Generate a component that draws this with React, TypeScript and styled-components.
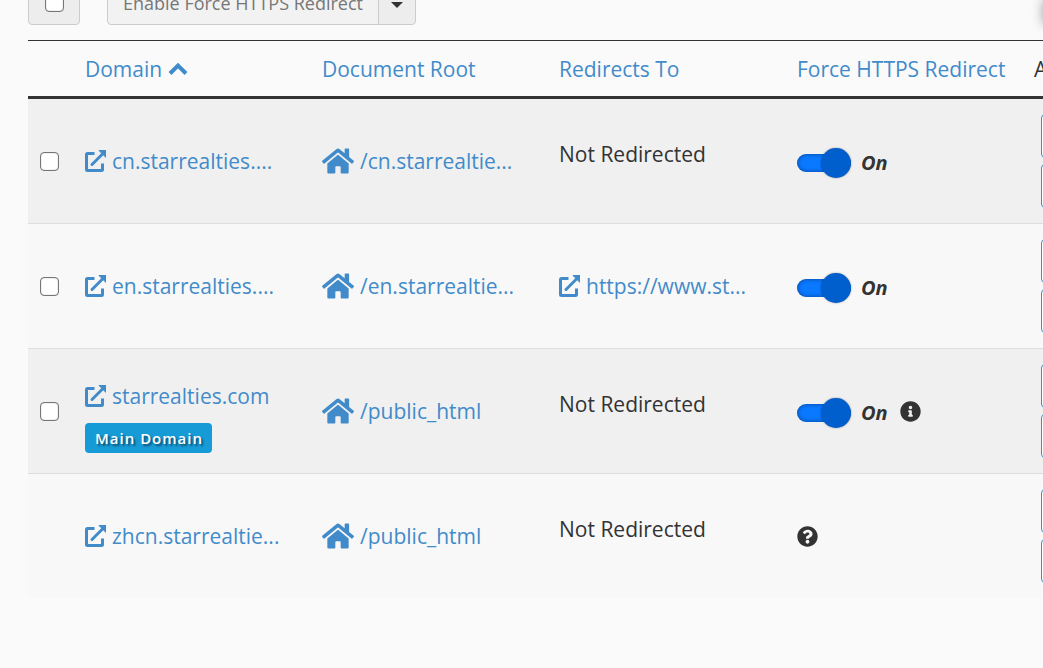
import React from 'react';
import styled, { createGlobalStyle } from 'styled-components';
import { FaHome, FaInfoCircle, FaQuestionCircle } from 'react-icons/fa';

const GlobalStyle = createGlobalStyle`
  *, *::before, *::after { box-sizing: border-box; }
  body {
    margin: 0;
    background: #fafafa;
    color: #333;
    font-family: "Open Sans", "Noto Sans", sans-serif;
    font-size: 21px;
    line-height: 30px;
    overflow: hidden;
  }
`;

const Page = styled.main`
  min-height: 100vh;
  padding-left: 28px;
  overflow: hidden;
`;

const Toolbar = styled.div`
  display: flex;
  gap: 27px;
  margin-top: -20px;
  margin-bottom: 15px;
`;

const SelectAll = styled.label`
  display: flex;
  align-items: center;
  justify-content: center;
  width: 52px;
  height: 45px;
  background: #ededed;
  border: 1px solid #ccc;
  border-radius: 4px;
`;

const Check = styled.input`
  appearance: none;
  display: block;
  flex: none;
  width: 19px;
  height: 19px;
  margin: 0;
  background: #fff;
  border: 1px solid #767676;
  border-radius: 4px;
  box-shadow: inset 0 0 1px #767676;
`;

const ButtonGroup = styled.div`
  display: flex;
`;

const GroupButton = styled.button<{ $caret?: boolean }>`
  display: flex;
  align-items: center;
  justify-content: center;
  height: 45px;
  padding: ${p => (p.$caret ? '4px 12px 0' : '0 15px')};
  margin-left: ${p => (p.$caret ? -1 : 0)}px;
  border: 1px solid #ccc;
  border-radius: ${p => (p.$caret ? '0 4px 4px 0' : '4px 0 0 4px')};
  background: ${p => (p.$caret ? '#ededed' : '#f2f2f2')};
  color: ${p => (p.$caret ? '#333' : '#777')};
  font: inherit;
  font-size: 18px;
`;

const Table = styled.table`
  table-layout: fixed;
  width: 100%;
  min-width: 1231px;
  border-collapse: separate;
  border-spacing: 0;
  border-top: 1px solid #333;
`;

const Col = styled.col<{ $w: number }>`
  width: ${p => p.$w}px;
`;

const HeadCell = styled.th`
  height: 58px;
  padding: 0 12px;
  border-bottom: 3px solid #333;
  font-weight: 400;
  text-align: left;
  white-space: nowrap;
`;

const Cell = styled.td`
  height: 125px;
  padding: 0 12px;
  border-bottom: 1px solid #ddd;
  vertical-align: middle;
`;

const Row = styled.tr`
  background: #f8f8f8;
  &:nth-child(odd) { background: #f0f0f0; }
  &:last-child > td {
    height: 124px;
    border-bottom: 0;
  }
`;

const Link = styled.a`
  display: flex;
  align-items: center;
  gap: 6px;
  color: #428bca;
  text-decoration: none;
  white-space: nowrap;
  svg { flex: none; }
`;

const LinkText = styled.span`
  overflow: hidden;
  text-overflow: ellipsis;
`;

const DomainBlock = styled.div<{ $main?: boolean }>`
  padding-top: ${p => (p.$main ? 12 : 0)}px;
`;

const Note = styled.p`
  margin: 0 0 15px;
`;

const Badge = styled.span`
  display: inline-block;
  margin-top: 12px;
  padding: 0 9px 0 10px;
  background: #179bd7;
  border-radius: 4px;
  color: #fff;
  font-size: 15px;
  font-weight: 600;
  letter-spacing: 1px;
  text-shadow: 2px 2px 2px rgba(0, 0, 0, 0.5);
  vertical-align: top;
`;

const SwitchRow = styled.div`
  display: flex;
  align-items: center;
  gap: 12px;
`;

const SwitchLabel = styled.label`
  display: flex;
  align-items: center;
  gap: 10px;
  padding-top: 3px;
  font-size: 20px;
  font-style: italic;
  font-weight: 700;
`;

const Switch = styled.input`
  appearance: none;
  display: flex;
  align-items: center;
  justify-content: flex-end;
  width: 54px;
  height: 18px;
  margin: 0;
  border-radius: 9px;
  background: #0a78ff;
  box-shadow: inset 0 0 4px rgba(0, 0, 0, 0.45);
  &::after {
    content: "";
    flex: none;
    width: 30px;
    height: 30px;
    border-radius: 50%;
    background: #005fcc;
    box-shadow: 0 0 2px rgba(0, 0, 0, 0.4);
  }
`;

const HelpIcon = styled(FaQuestionCircle)`
  display: block;
`;

const Actions = styled.div`
  display: flex;
  flex-direction: column;
  gap: 6px;
  padding-left: 7px;
`;

const ActionButton = styled.button`
  width: 150px;
  height: 44px;
  background: #fff;
  border: 1px solid #428bca;
  border-radius: 4px;
`;

const SidePanel = styled.aside`
  position: absolute;
  top: 0;
  left: 100%;
  width: 40px;
  height: 24px;
  background: #fff;
  box-shadow: 0 0 12px rgba(0, 0, 0, 0.35);
`;

const ExternalIcon = () => (
  <svg width="21" height="22" viewBox="0 0 21 22" fill="none" aria-hidden="true">
    <path d="M9.500 3.500H2.500a1 1 0 0 0-1 1V19.500a1 1 0 0 0 1 1H16.500a1 1 0 0 0 1-1V13.500" stroke="currentColor" strokeWidth="3" />
    <path d="M7 14.500L17.500 4" stroke="currentColor" strokeWidth="3" strokeLinecap="round" />
    <path d="M14 0.500H21V7.500Z" fill="currentColor" stroke="currentColor" strokeLinejoin="round" />
  </svg>
);

const SortIcon = () => (
  <svg width="20" height="14" viewBox="0 0 20 14" fill="none" aria-hidden="true">
    <path d="M2 11.500L10 3.500L18 11.500" stroke="currentColor" strokeWidth="4" />
  </svg>
);

const Caret = () => (
  <svg width="12" height="6" viewBox="0 0 12 6" aria-hidden="true">
    <path d="M0 0H12L6 6Z" fill="currentColor" />
  </svg>
);

type Domain = {
  name: string;
  root: string;
  redirect?: string;
  main?: boolean;
  selectable: boolean;
  https: boolean;
};

const domains: Domain[] = [
  { name: 'cn.starrealties....', root: '/cn.starrealtie...', selectable: true, https: true },
  { name: 'en.starrealties....', root: '/en.starrealtie...', redirect: 'https://www.st...', selectable: true, https: true },
  { name: 'starrealties.com', root: '/public_html', main: true, selectable: true, https: true },
  { name: 'zhcn.starrealtie...', root: '/public_html', selectable: false, https: false },
];

const columns = ['Domain', 'Document Root', 'Redirects To', 'Force HTTPS Redirect'];

export default function App() {
  return (
    <Page>
      <GlobalStyle />
      <Toolbar>
        <SelectAll><Check type="checkbox" aria-label="Select all domains" /></SelectAll>
        <ButtonGroup>
          <GroupButton type="button">Enable Force HTTPS Redirect</GroupButton>
          <GroupButton type="button" $caret aria-label="More options"><Caret /></GroupButton>
        </ButtonGroup>
      </Toolbar>
      <Table>
        <colgroup>
          <Col $w={45} /><Col $w={237} /><Col $w={237} /><Col $w={238} /><Col $w={237} /><Col $w={237} />
        </colgroup>
        <thead>
          <tr>
            <HeadCell />
            {columns.map((label, i) => (
              <HeadCell key={label} scope="col">
                <Link href="#">{label}{i === 0 && <SortIcon />}</Link>
              </HeadCell>
            ))}
            <HeadCell scope="col">Actions</HeadCell>
          </tr>
        </thead>
        <tbody>
          {domains.map(d => (
            <Row key={d.name}>
              <Cell>{d.selectable && <Check type="checkbox" aria-label={`Select ${d.name}`} />}</Cell>
              <Cell>
                <DomainBlock $main={d.main}>
                  <Link href="#"><ExternalIcon /><LinkText>{d.name}</LinkText></Link>
                  {d.main && <Badge>Main Domain</Badge>}
                </DomainBlock>
              </Cell>
              <Cell><Link href="#"><FaHome size={32} /><LinkText>{d.root}</LinkText></Link></Cell>
              <Cell>
                {d.redirect
                  ? <Link href="#"><ExternalIcon /><LinkText>{d.redirect}</LinkText></Link>
                  : <Note>Not Redirected</Note>}
              </Cell>
              <Cell>
                {d.https ? (
                  <SwitchRow>
                    <SwitchLabel><Switch type="checkbox" role="switch" defaultChecked />On</SwitchLabel>
                    {d.main && <FaInfoCircle size={21} />}
                  </SwitchRow>
                ) : <HelpIcon size={21} />}
              </Cell>
              <Cell>
                <Actions>
                  <ActionButton type="button" aria-label={`Manage ${d.name}`} />
                  <ActionButton type="button" aria-label={`Create email for ${d.name}`} />
                </Actions>
              </Cell>
            </Row>
          ))}
        </tbody>
      </Table>
      <SidePanel />
    </Page>
  );
}
